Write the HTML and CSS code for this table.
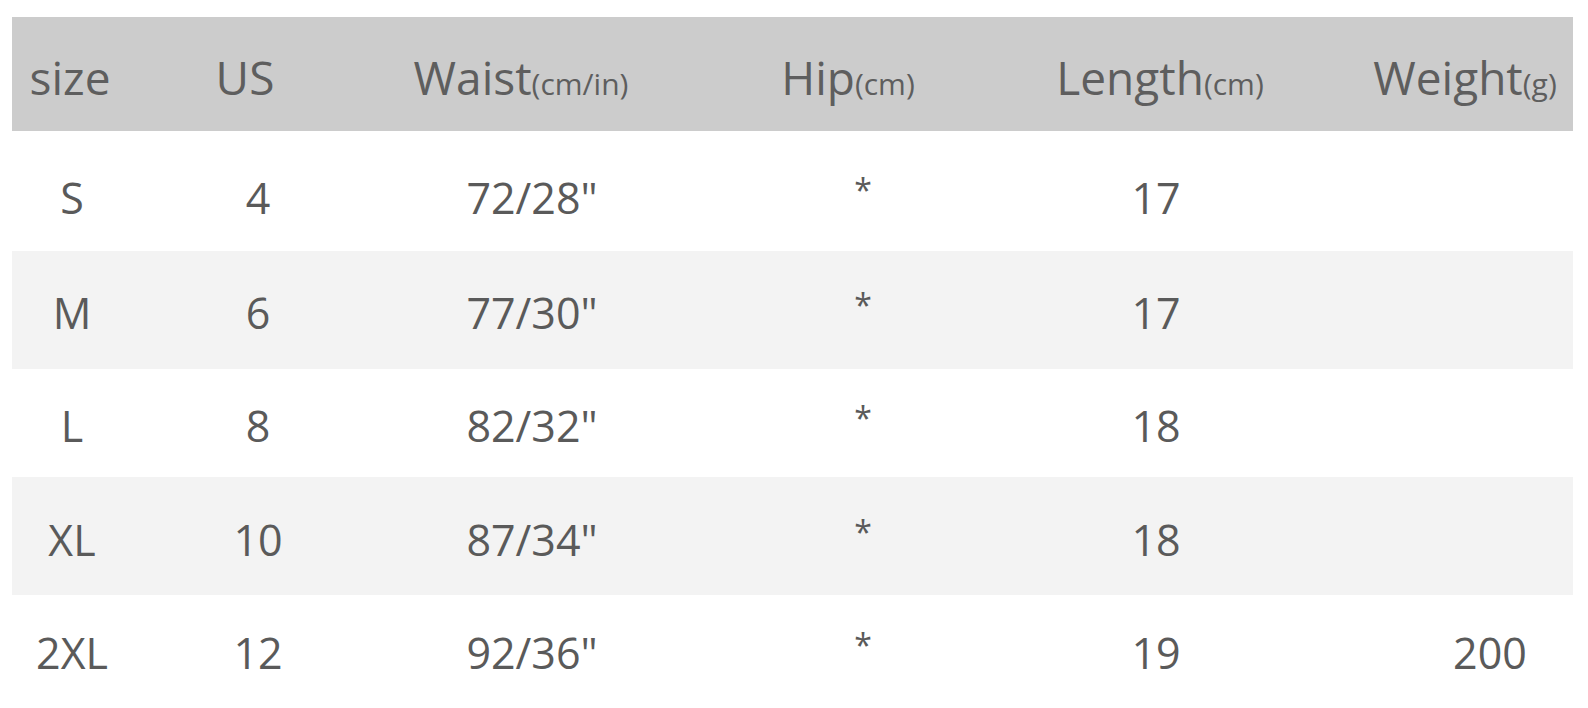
FILE: index.html
```html
<!DOCTYPE html>
<html lang="en">
<head>
<meta charset="utf-8">
<title>Size chart</title>
<link rel="stylesheet" href="styles.css">
</head>
<body>
<div class="chart">
  <div class="row head">
    <div class="cell c-size">size</div>
    <div class="cell c-us">US</div>
    <div class="cell c-waist">Waist<span class="unit">(cm/in)</span></div>
    <div class="cell c-hip">Hip<span class="unit">(cm)</span></div>
    <div class="cell c-len">Length<span class="unit">(cm)</span></div>
    <div class="cell c-wt">Weight<span class="unit">(g)</span></div>
  </div>
  <div class="row r1">
    <div class="cell">S</div><div class="cell">4</div><div class="cell">72/28"</div><div class="cell star">*</div><div class="cell">17</div><div class="cell c-wt"></div>
  </div>
  <div class="row r2 alt">
    <div class="cell">M</div><div class="cell">6</div><div class="cell">77/30"</div><div class="cell star">*</div><div class="cell">17</div><div class="cell c-wt"></div>
  </div>
  <div class="row r3">
    <div class="cell">L</div><div class="cell">8</div><div class="cell">82/32"</div><div class="cell star">*</div><div class="cell">18</div><div class="cell c-wt"></div>
  </div>
  <div class="row r4 alt">
    <div class="cell">XL</div><div class="cell">10</div><div class="cell">87/34"</div><div class="cell star">*</div><div class="cell">18</div><div class="cell c-wt"></div>
  </div>
  <div class="row r5">
    <div class="cell">2XL</div><div class="cell">12</div><div class="cell">92/36"</div><div class="cell star">*</div><div class="cell">19</div><div class="cell c-wt">200</div>
  </div>
</div>
</body>
</html>
```

FILE: styles.css
```css
html, body {
  margin: 0;
  padding: 0;
  background: #ffffff;
}

body {
  font-family: "Open Sans", "Noto Sans", sans-serif;
  color: #5a5a5a;
}

.chart {
  margin: 17px 0 0 12px;
  width: 1561px;
  display: flex;
  flex-direction: column;
}

.row {
  display: grid;
  grid-template-columns: 120px 252px 296px 366px 220px 307px;
  align-items: center;
  font-size: 43px;
  background: #ffffff;
}

.row.alt {
  background: #f3f3f3;
}

.cell {
  text-align: center;
  white-space: nowrap;
}

.head {
  height: 114px;
  background: #cccccc;
  font-size: 46px;
  color: #5e5e5e;
  padding-top: 6px;
  box-sizing: border-box;
}

.unit {
  font-size: 30px;
}

.head .c-size { padding-right: 4px; }
.head .c-us { padding-right: 26px; }
.head .c-waist { padding-right: 22px; }
.head .c-hip { padding-right: 30px; }
.head .c-len { padding-left: 8px; }
.head .c-wt { padding-left: 91px; }

.c-wt { padding-left: 141px; }

.r1 { height: 120px; padding-top: 12px; box-sizing: border-box; }
.r2 { height: 118px; padding-top: 5px; box-sizing: border-box; }
.r3 { height: 108px; padding-top: 4px; box-sizing: border-box; }
.r4 { height: 118px; padding-top: 6px; box-sizing: border-box; }
.r5 { height: 113px; padding-top: 1px; box-sizing: border-box; }

.star {
  font-size: 32px;
  padding-bottom: 16px;
}
```
